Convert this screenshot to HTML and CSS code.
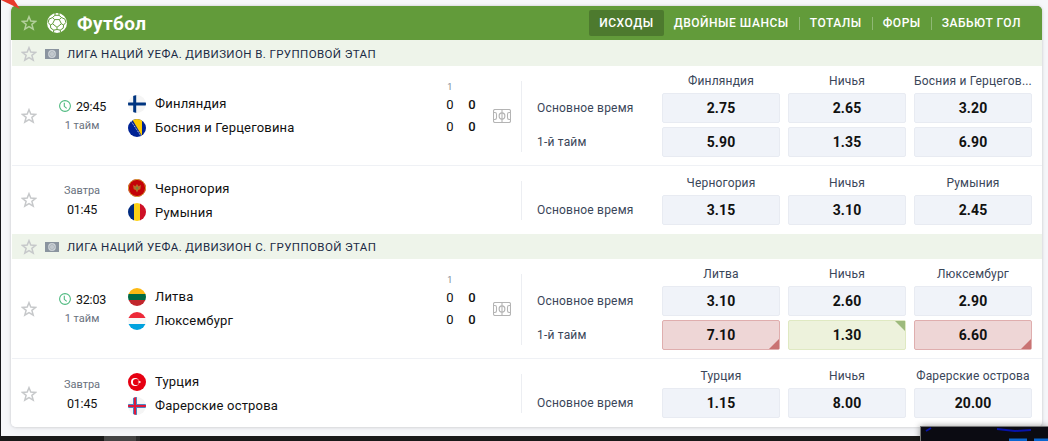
FILE: index.html
```
<!DOCTYPE html>
<html lang="ru">
<head>
  <meta charset="UTF-8">
  <meta name="viewport" content="width=device-width, initial-scale=1.0">
  <title>Футбол</title>
  <link rel="stylesheet" href="styles.css">
</head>
<body>

  <!-- Icons -->
  <svg class="sprite" width="0" height="0">
    <symbol id="star" viewBox="0 0 16 16">
      <path d="M8 1.7l1.8 4.4 4.9.3-3.8 3 1.3 4.8L8 11.6l-4.2 2.6 1.3-4.8-3.800-3 4.900-.3z" fill="none" stroke="currentColor" stroke-width="1.5"/>
    </symbol>
    <symbol id="ball" viewBox="0 0 20 20">
      <circle cx="10" cy="10" r="10" fill="#fff"/>
      <g fill="none" stroke="#629b3a" stroke-width="1">
        <path d="M7.7 6.6h4.6l2.1 4.2-4.400 3.500-4.400-3.500zM7.700 6.600L5.400 4.600M12.300 6.600l2.300-2M5.600 10.800l-2.200 1.200M14.400 10.800l2.200 1.200M10 14.300v2.200"/>
        <path d="M5.400 4.600L8 2.300h4l2.600 2.300M5.400 4.600L2 6.200l-.8 3.300L3.400 12l.4 3.200 3 1.900 3.200-.6 3.200.6 3-1.900.4-3.200 2.200-2.500L18 6.200l-3.400-1.600M8 2.300V0M12 2.300V0M6.800 17.100l-.3 2M13.200 17.100l.3 2"/>
      </g>
    </symbol>
    <symbol id="league" viewBox="0 0 14 10">
      <path d="M0 0h14v10H0z" fill="#8a949f"/>
      <circle cx="7" cy="5" r="3.9" fill="#ced4d8"/>
      <circle cx="7" cy="5" r="2.4" fill="none" stroke="#a2abb3" stroke-width=".8"/>
      <path d="M3.5 5h7M7 1.5v7" stroke="#b2bac0" stroke-width=".5"/>
    </symbol>
    <symbol id="clock" viewBox="0 0 12 12">
      <circle cx="6" cy="6" r="5.4" fill="none" stroke="#4fba80" stroke-width="1.1"/>
      <path d="M5.3 2.8v3.5l2.4 2" fill="none" stroke="#4fba80" stroke-width="1.1"/>
    </symbol>
    <symbol id="pitch" viewBox="0 0 18 14">
      <g fill="none" stroke="#b4b4b4" stroke-width="1.1">
        <rect x=".5" y=".5" width="17" height="13" rx="1.5"/>
        <path d="M9 .5v13M.5 3.5h1.4q1.6 0 1.6 1.7v3.6q0 1.7-1.6 1.7H.5M17.5 3.5h-1.4q-1.6 0-1.6 1.7v3.6q0 1.7 1.6 1.7h1.4"/>
        <ellipse cx="9" cy="7" rx="2.9" ry="3.1"/>
      </g>
    </symbol>
    <symbol id="fi" viewBox="0 0 18 18">
      <path d="M0 0h18v18H0z" fill="#f5f5f5"/>
      <path d="M0 9h18M6.7 0v18" stroke="#003580" stroke-width="3"/>
    </symbol>
    <symbol id="ba" viewBox="0 0 18 18">
      <path d="M0 0h18v18H0z" fill="#002395"/>
      <path d="M4 0h10v17z" fill="#fecb00"/>
      <path d="M3 2l10 15" stroke="#c9cfdf" stroke-width="1" stroke-dasharray="1.2 .8"/>
    </symbol>
    <symbol id="me" viewBox="0 0 18 18">
      <path d="M0 0h18v18H0z" fill="#c40308"/>
      <circle cx="9" cy="9" r="8.6" fill="none" stroke="#d3ae3b" stroke-width="1"/>
      <path d="M5 6l2.4 1.3L9 5l1.6 2.3L13 6l-.7 4.2-2 .8L9 13.5 7.7 11l-2-.8z" fill="#b96c28"/>
      <path d="M8 8h2v2.3H8z" fill="#76833f"/>
    </symbol>
    <symbol id="ro" viewBox="0 0 18 18">
      <path d="M0 0h6v18H0z" fill="#002b7f"/>
      <path d="M6 0h6v18H6z" fill="#fcd116"/>
      <path d="M12 0h6v18h-6z" fill="#ce1126"/>
    </symbol>
    <symbol id="lt" viewBox="0 0 18 18">
      <path d="M0 0h18v6H0z" fill="#fdb913"/>
      <path d="M0 6h18v6H0z" fill="#006a44"/>
      <path d="M0 12h18v6H0z" fill="#c1272d"/>
    </symbol>
    <symbol id="lu" viewBox="0 0 18 18">
      <path d="M0 0h18v6H0z" fill="#ed2939"/>
      <path d="M0 6h18v6H0z" fill="#f8f8f8"/>
      <path d="M0 12h18v6H0z" fill="#00a1de"/>
    </symbol>
    <symbol id="tr" viewBox="0 0 18 18">
      <path d="M0 0h18v18H0z" fill="#e60012"/>
      <circle cx="7" cy="9" r="4" fill="#fff"/>
      <circle cx="8" cy="9" r="3.1" fill="#e60012"/>
      <path d="M9.5 9l1.3-.4V7.2l.8 1.1 1.3-.4-.8 1.1.8 1.1-1.3-.4-.8 1.1V9.4z" fill="#fff"/>
    </symbol>
    <symbol id="fo" viewBox="0 0 18 18">
      <path d="M0 0h18v18H0z" fill="#f5f5f5"/>
      <path d="M0 9h18M7 0v18" stroke="#4a86c4" stroke-width="4"/>
      <path d="M0 9h18M7 0v18" stroke="#e0173a" stroke-width="2"/>
    </symbol>
  </svg>

  <div class="page">
    <div class="card">
      <div class="header">
        <svg class="star"><use href="#star"/></svg>
        <svg class="ball"><use href="#ball"/></svg>
        <h1>Футбол</h1>
        <div class="tabs">
          <button class="active">ИСХОДЫ</button>
          <button>ДВОЙНЫЕ ШАНСЫ</button>
          <button>ТОТАЛЫ</button>
          <button>ФОРЫ</button>
          <button>ЗАБЬЮТ ГОЛ</button>
        </div>
      </div>

      <div class="league">
        <svg class="star"><use href="#star"/></svg>
        <svg class="league-icon"><use href="#league"/></svg>
        <h2>ЛИГА НАЦИЙ УЕФА. ДИВИЗИОН B. ГРУППОВОЙ ЭТАП</h2>
      </div>

      <div class="match live">
        <svg class="star"><use href="#star"/></svg>
        <div class="time">
          <span class="clock"><svg><use href="#clock"/></svg>29:45</span>
          <span class="note">1 тайм</span>
        </div>
        <div class="teams">
          <div class="team"><svg class="flag"><use href="#fi"/></svg>Финляндия</div>
          <div class="team"><svg class="flag"><use href="#ba"/></svg>Босния и Герцеговина</div>
        </div>
        <div class="score">
          <span class="period">1</span><span></span>
          <span>0</span><b>0</b>
          <span>0</span><b>0</b>
        </div>
        <svg class="pitch"><use href="#pitch"/></svg>
        <div class="odds">
          <span></span><span class="outcome">Финляндия</span><span class="outcome">Ничья</span><span class="outcome">Босния и Герцегов...</span>
          <span class="market">Основное время</span><button class="odd">2.75</button><button class="odd">2.65</button><button class="odd">3.20</button>
          <span class="market">1-й тайм</span><button class="odd">5.90</button><button class="odd">1.35</button><button class="odd">6.90</button>
        </div>
      </div>

      <div class="match">
        <svg class="star"><use href="#star"/></svg>
        <div class="time">
          <span class="note">Завтра</span>
          <span class="clock">01:45</span>
        </div>
        <div class="teams">
          <div class="team"><svg class="flag"><use href="#me"/></svg>Черногория</div>
          <div class="team"><svg class="flag"><use href="#ro"/></svg>Румыния</div>
        </div>
        <div class="odds">
          <span></span><span class="outcome">Черногория</span><span class="outcome">Ничья</span><span class="outcome">Румыния</span>
          <span class="market">Основное время</span><button class="odd">3.15</button><button class="odd">3.10</button><button class="odd">2.45</button>
        </div>
      </div>

      <div class="league">
        <svg class="star"><use href="#star"/></svg>
        <svg class="league-icon"><use href="#league"/></svg>
        <h2>ЛИГА НАЦИЙ УЕФА. ДИВИЗИОН C. ГРУППОВОЙ ЭТАП</h2>
      </div>

      <div class="match live">
        <svg class="star"><use href="#star"/></svg>
        <div class="time">
          <span class="clock"><svg><use href="#clock"/></svg>32:03</span>
          <span class="note">1 тайм</span>
        </div>
        <div class="teams">
          <div class="team"><svg class="flag"><use href="#lt"/></svg>Литва</div>
          <div class="team"><svg class="flag"><use href="#lu"/></svg>Люксембург</div>
        </div>
        <div class="score">
          <span class="period">1</span><span></span>
          <span>0</span><b>0</b>
          <span>0</span><b>0</b>
        </div>
        <svg class="pitch"><use href="#pitch"/></svg>
        <div class="odds">
          <span></span><span class="outcome">Литва</span><span class="outcome">Ничья</span><span class="outcome">Люксембург</span>
          <span class="market">Основное время</span><button class="odd">3.10</button><button class="odd">2.60</button><button class="odd">2.90</button>
          <span class="market">1-й тайм</span><button class="odd down">7.10</button><button class="odd up">1.30</button><button class="odd down">6.60</button>
        </div>
      </div>

      <div class="match">
        <svg class="star"><use href="#star"/></svg>
        <div class="time">
          <span class="note">Завтра</span>
          <span class="clock">01:45</span>
        </div>
        <div class="teams">
          <div class="team"><svg class="flag"><use href="#tr"/></svg>Турция</div>
          <div class="team"><svg class="flag"><use href="#fo"/></svg>Фарерские острова</div>
        </div>
        <div class="odds">
          <span></span><span class="outcome">Турция</span><span class="outcome">Ничья</span><span class="outcome">Фарерские острова</span>
          <span class="market">Основное время</span><button class="odd">1.15</button><button class="odd">8.00</button><button class="odd">20.00</button>
        </div>
      </div>
    </div>
  </div>

  <div class="taskbar"><div class="task"></div></div>

  <svg class="arrow" width="22" height="10"><path d="M1 0h13l6 9z" fill="#e8392c"/></svg>

  <!-- Floating video -->
  <div class="video">
    <svg width="127" height="14">
      <path d="M5 4l5-3M76 2l18 2 16-1" stroke="#0712a8" stroke-width="2" fill="none"/>
      <path d="M88 13h18M113 13h14" stroke="#0a66d0" stroke-width="3"/>
    </svg>
  </div>

</body>
</html>
```
FILE: styles.css
```
* {
  box-sizing: border-box;
}

body {
  margin: 0;
  height: 441px;
  display: flex;
  flex-direction: column;
  overflow: hidden;
  background-color: #f6f7fa;
  font-family: Roboto, "Liberation Sans", sans-serif;
  font-size: 13px;
  letter-spacing: 0.2px;
  color: #111;
}

button {
  font: inherit;
  letter-spacing: inherit;
  border: none;
  padding: 0;
  cursor: pointer;
}

.sprite {
  position: absolute;
}

.page {
  height: 436px;
  padding: 6px 6px 0 10px;
  border-left: 1px solid #17171b;
}

.card {
  width: 1031px;
  height: 421px;
  padding-left: 1px;
  background: linear-gradient(#629b3a 34px, #fff 34px);
  border-radius: 5px;
  overflow: hidden;
  box-shadow: 0 0 3px rgba(0, 0, 0, 0.18), 0 2px 8px rgba(0, 0, 0, 0.05);
}

.star {
  width: 16px;
  height: 16px;
  margin-left: 9px;
  color: #c6c8ca;
  flex-shrink: 0;
}

/* Header */
.header {
  display: flex;
  align-items: center;
  height: 34px;
  background-color: #629b3a;
  color: #fff;
}

.header .star {
  color: #b3d09c;
}

.ball {
  width: 20px;
  height: 20px;
  margin-left: 10px;
}

.header h1 {
  margin: 0 0 0 10px;
  font-size: 19px;
  font-weight: 700;
  letter-spacing: 0.4px;
}

.tabs {
  display: flex;
  align-items: center;
  margin-left: auto;
  padding-right: 11px;
}

.tabs button {
  height: 26px;
  padding: 0 10px;
  background: none;
  color: #fff;
  font-size: 12px;
  font-weight: 500;
  letter-spacing: 0.53px;
  white-space: nowrap;
}

.tabs button.active {
  background-color: #4d7a2e;
  border-radius: 2px;
}

.tabs button:nth-child(n+3) {
  height: 13px;
  line-height: 13px;
  border-left: 1px solid #8fb874;
}

/* League */
.league {
  display: flex;
  align-items: center;
  height: 26px;
  padding-top: 1px;
  background-color: #eef4ea;
}

.match + .league {
  height: 25px;
  margin-top: -1px;
}

.league-icon {
  width: 14px;
  height: 10px;
  margin-left: 8px;
}

.league h2 {
  margin: 0 0 0 8px;
  font-size: 11.5px;
  font-weight: 400;
  letter-spacing: 0.4px;
  color: #1b2b45;
}

/* Match */
.match {
  display: flex;
  align-items: center;
  height: 69px;
  border-bottom: 1px solid #eff1f5;
}

.match.live {
  height: 100px;
}

.match:last-child {
  border-bottom: none;
}

.time {
  width: 90px;
  display: flex;
  flex-direction: column;
  align-items: center;
  line-height: 19px;
}

.clock {
  display: flex;
  align-items: center;
  gap: 5px;
  font-size: 12.5px;
  letter-spacing: -0.2px;
}

.live .clock {
  margin-left: 1px;
}

.clock svg {
  width: 12px;
  height: 12px;
}

.note {
  font-size: 11px;
  letter-spacing: 0;
  color: #68707d;
}

.teams {
  width: 315px;
}

.team {
  display: flex;
  align-items: center;
  gap: 9px;
  height: 24px;
}

.teams {
  margin-right: 1px;
}

.flag {
  width: 18px;
  height: 18px;
  margin-left: 1px;
  border-radius: 50%;
}

.score {
  display: grid;
  grid-template-columns: 22px 22px;
  grid-template-rows: 12px 22px 22px;
  align-items: center;
  justify-items: center;
  margin-bottom: 12px;
  line-height: 14px;
  margin-left: -4px;
}

.score b {
  font-weight: 500;
}

.score .period {
  font-size: 9px;
  line-height: 11px;
  color: #7b8593;
}

.pitch {
  width: 18px;
  height: 14px;
  margin-left: 10px;
}

.odds {
  position: relative;
  align-self: flex-start;
  display: grid;
  grid-template-columns: 117px repeat(3, 118px);
  grid-auto-rows: 30px;
  grid-template-rows: 19px;
  gap: 4px 8px;
  margin-left: auto;
  padding: 6px 10px 0 0;
  align-items: center;
  color: #3a4659;
}

.live .odds {
  padding-top: 4px;
}

/* line between the teams and the odds */
.odds::before {
  content: "";
  position: absolute;
  left: -16px;
  top: 15px;
  bottom: 5px;
  width: 1px;
  background-color: #eceef2;
}

.outcome {
  padding: 3px 8px 0 0;
  margin: 0 -4px;
  font-size: 12px;
  letter-spacing: 0.18px;
  text-align: center;
  white-space: nowrap;
}

.outcome {
  padding-left: 0;
  padding-right: 0;
}

.market {
  font-size: 12px;
}

.odd {
  position: relative;
  height: 30px;
  background-color: #f0f3f9;
  border: 1px solid #e8ebf2;
  border-radius: 2px;
  color: #111;
  font-size: 14px;
  font-weight: 700;
  letter-spacing: 0.1px;
}

.odd.down {
  background-color: #eed6d6;
  border-color: #dfaeae;
}

.odd.up {
  background-color: #edf2dc;
  border-color: #dfe9c2;
}

/* Corner marks */
.odd.down::after,
.odd.up::after {
  content: "";
  position: absolute;
  right: 0;
  border: 5px solid transparent;
}

.odd.down::after {
  bottom: 0;
  border-right-color: #c97373;
  border-bottom-color: #c97373;
}

.odd.up::after {
  top: 0;
  border-right-color: #9dba7c;
  border-top-color: #9dba7c;
}

/* Desktop around the page */
.taskbar {
  height: 5px;
  padding-left: 104px;
  background-color: #191919;
}

.task {
  width: 36px;
  height: 5px;
  background-color: #444;
  border-right: 4px solid #2c2c2c;
}

.arrow {
  position: absolute;
  left: 0;
  top: 0;
}

.video {
  position: absolute;
  left: 920px;
  top: 426px;
  width: 128px;
  height: 15px;
  background-color: #0b0b12;
  border: solid #777;
  border-width: 1px 0 0 1px;
  box-shadow: 0 0 6px rgba(0, 0, 0, 0.4);
  overflow: hidden;
}
```
